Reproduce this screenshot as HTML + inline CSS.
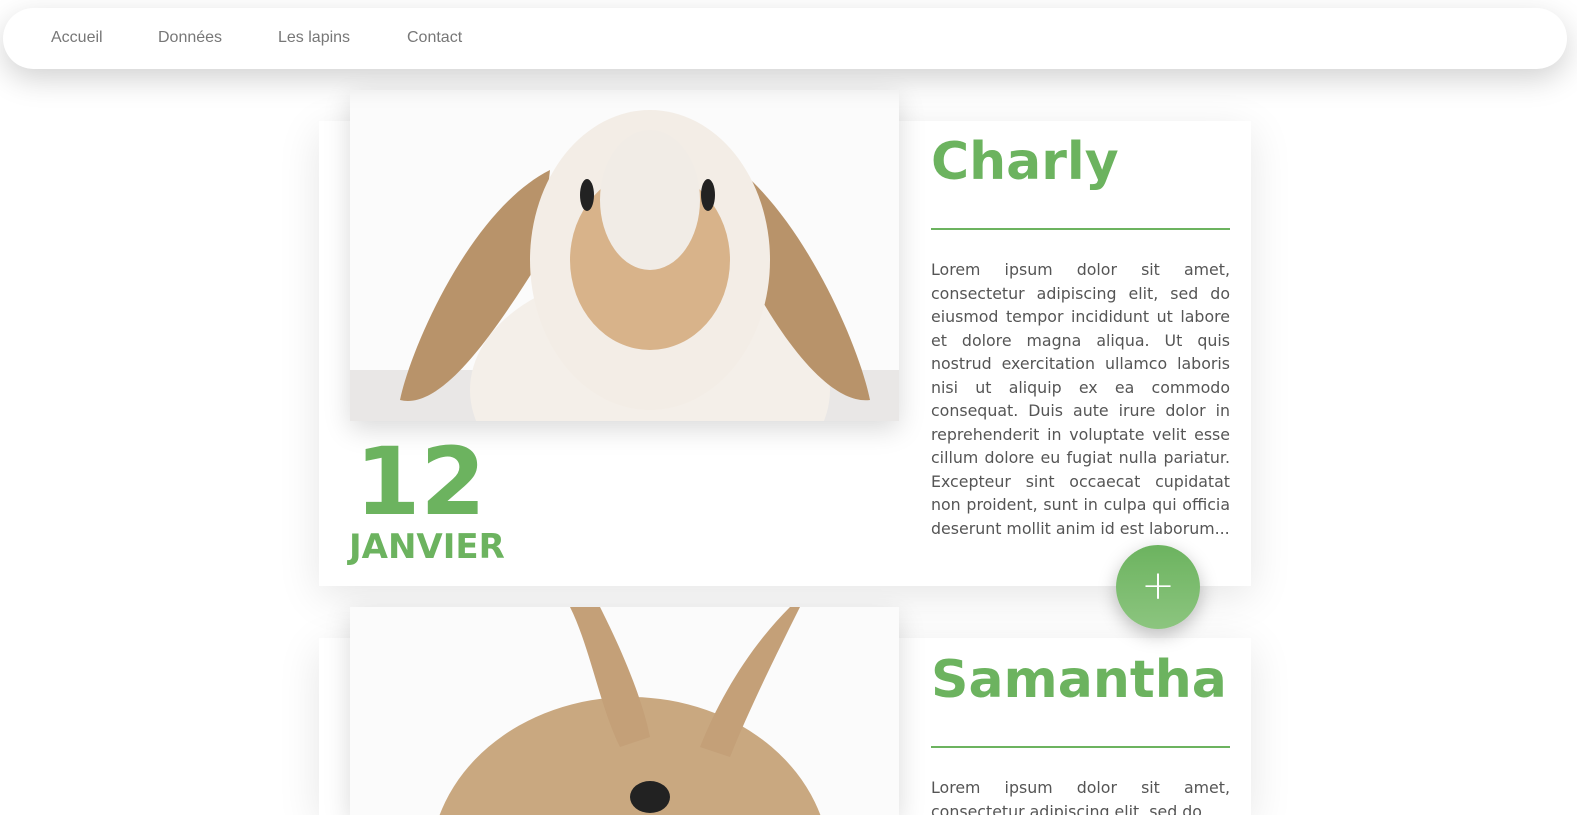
<!DOCTYPE html>
<html style="width:1577px;height:815px;overflow:hidden"><head><meta charset="utf-8"><style>
*{margin:0;padding:0;box-sizing:border-box}
body{width:1577px;height:815px;overflow:hidden;background:#fff;font-family:"DejaVu Sans","Liberation Sans",sans-serif;position:relative}
.nav{position:absolute;left:3px;top:8px;width:1564px;height:61px;border-radius:31px;background:#fff;box-shadow:0 10px 30px rgba(0,0,0,.18);z-index:5}
.nav a{position:absolute;top:21px;font-family:"Liberation Sans",sans-serif;font-size:16px;color:#777;text-decoration:none}
.card{position:absolute;left:319px;width:932px;height:465px;background:#fff;box-shadow:0 10px 40px rgba(0,0,0,.10)}
.img{position:absolute;left:350px;width:549px;height:331px;background:#fbfbfb;box-shadow:0 8px 25px rgba(0,0,0,.15);overflow:hidden}
.title{position:absolute;left:931px;font-weight:bold;color:#6cb35f;font-size:52px}
.line{position:absolute;left:931px;width:299px;height:2px;background:#6cb35f}
.txt{position:absolute;left:931px;width:299px;font-size:15.8px;line-height:23.5px;color:#555;text-align:justify}
.num{position:absolute;left:355px;top:436px;font-weight:bold;color:#6cb35f;font-size:94px;line-height:1}
.mon{position:absolute;left:349px;top:530px;font-weight:bold;color:#6cb35f;font-size:34px;line-height:1}
.plus{position:absolute;left:1116px;top:545px;width:84px;height:84px;border-radius:50%;background:linear-gradient(180deg,#6cb35f,#8cc57f);box-shadow:0 6px 18px rgba(0,0,0,.25);color:#fff;font-size:40px;text-align:center;line-height:82px;font-weight:200;z-index:3}
</style></head><body>
<div class="nav"><a style="left:48px">Accueil</a><a style="left:155px">Données</a><a style="left:275px">Les lapins</a><a style="left:404px">Contact</a></div>

<div class="card" style="top:121px"></div>
<div class="img" style="top:90px">
<svg width="549" height="331"><rect y="280" width="549" height="51" fill="#e9e7e6"/>
<ellipse cx="300" cy="300" rx="180" ry="120" fill="#f4efe9"/>
<path d="M200 80 C120 120 60 260 50 310 C90 320 140 250 190 170Z" fill="#b8936a"/>
<path d="M390 80 C460 140 510 260 520 310 C480 315 430 250 390 170Z" fill="#b8936a"/>
<ellipse cx="300" cy="170" rx="120" ry="150" fill="#f3ede6"/>
<ellipse cx="300" cy="170" rx="80" ry="90" fill="#d8b38a"/>
<ellipse cx="300" cy="110" rx="50" ry="70" fill="#f1ece6"/>
<ellipse cx="237" cy="105" rx="7" ry="16" fill="#222"/><ellipse cx="358" cy="105" rx="7" ry="16" fill="#222"/>
</svg></div>
<div class="title" style="top:132px">Charly</div>
<div class="line" style="top:228px"></div>
<div class="txt" style="top:258px">Lorem ipsum dolor sit amet, consectetur adipiscing elit, sed do eiusmod tempor incididunt ut labore et dolore magna aliqua. Ut quis nostrud exercitation ullamco laboris nisi ut aliquip ex ea commodo consequat. Duis aute irure dolor in reprehenderit in voluptate velit esse cillum dolore eu fugiat nulla pariatur. Excepteur sint occaecat cupidatat non proident, sunt in culpa qui officia deserunt mollit anim id est laborum...</div>
<div class="num">12</div><div class="mon">JANVIER</div>
<div class="plus">+</div>

<div class="card" style="top:638px;height:177px"></div>
<div class="img" style="top:607px;height:208px">
<svg width="549" height="331"><ellipse cx="280" cy="260" rx="200" ry="170" fill="#c9a880"/>
<path d="M220 0 C240 40 250 100 270 140 L300 130 C290 80 260 20 250 0Z" fill="#c4a078"/>
<path d="M440 0 C400 40 370 90 350 140 L380 150 C400 100 430 40 450 0Z" fill="#c4a078"/>
<ellipse cx="300" cy="190" rx="20" ry="16" fill="#222"/></svg></div>
<div class="title" style="top:650px">Samantha</div>
<div class="line" style="top:746px"></div>
<div class="txt" style="top:776px">Lorem ipsum dolor sit amet, consectetur adipiscing elit, sed do</div>
</body></html>
